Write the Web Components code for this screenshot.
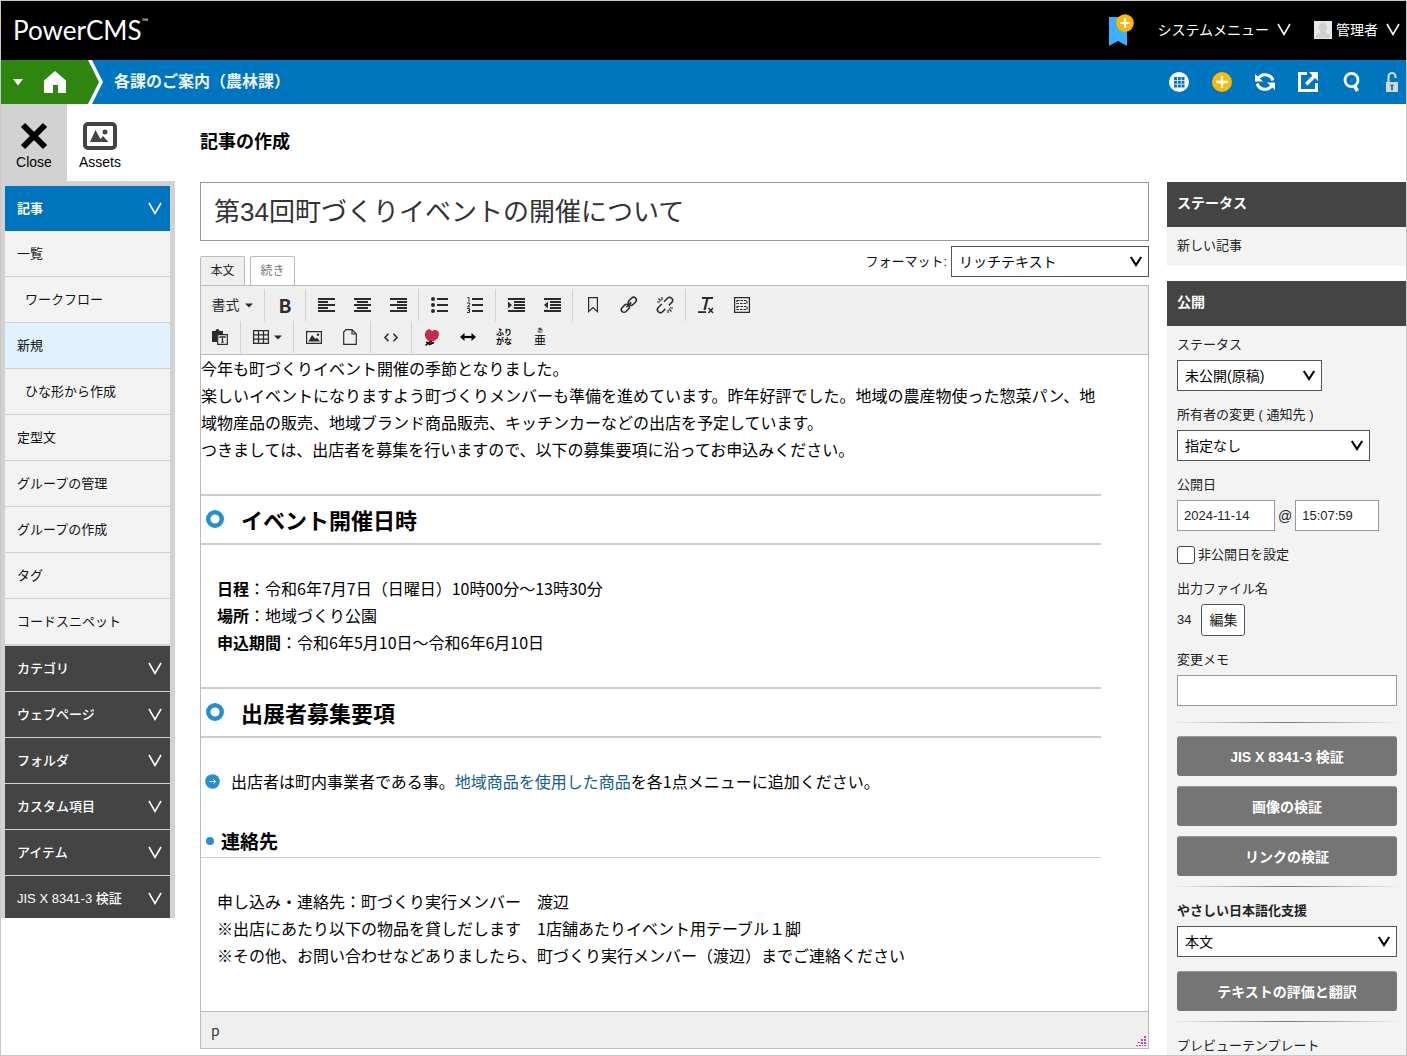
<!DOCTYPE html>
<html lang="ja">
<head>
<meta charset="utf-8">
<title>記事の作成 | PowerCMS</title>
<style>
  body {
    margin: 0;
    background: #fff;
    color: #111;
    font: 13px/20px "Liberation Sans", "Noto Sans CJK JP", sans-serif;
  }
</style>
</head>
<body>
<cms-app></cms-app>

<script>
const RESET = `
  *, *::before, *::after { box-sizing: border-box; }
  :host { box-sizing: border-box; display: block; }
  button, input, select { font: inherit; color: inherit; margin: 0; border-radius: 0; }
  button { cursor: pointer; background: none; border: 0; padding: 0; }
  a { color: inherit; text-decoration: none; }
  svg { display: block; }
`;

function define(name, css, html) {
  customElements.define(name, class extends HTMLElement {
    connectedCallback() {
      if (this.shadowRoot) return;
      const root = this.attachShadow({ mode: 'open' });
      root.innerHTML = `<style>${RESET}${css}</style>` + (typeof html === 'function' ? html(this) : html);
    }
  });
}

/* ---------- icons: [width, height, markup] ---------- */
const lines = (rows) => rows.map(([x, w], i) => `<path d="M${x} ${i * 3}h${w}v2h-${w}z"/>`).join('');
const ICONS = {
  chevron: [14, 14, '<path d="M1 1 7 11.500 13 1" fill="none" stroke="currentColor" stroke-width="1.600"/>'],
  'chevron-bold': [12, 12, '<path d="M.8 1 6 9 11.200 1" fill="none" stroke="currentColor" stroke-width="2.100"/>'],
  caret: [8, 5, '<path d="M0 .5h8L4 4.500z"/>'],
  'caret-big': [10, 7, '<path d="M0 0h10L5 6.500z"/>'],
  home: [22, 22, '<path d="M11 0 22 9.500V22h-8v-8H9v8H0V9.500z"/>'],
  bookmarkadd: [26, 32, '<path d="M0 3h18v29l-9-5-9 5z" fill="#3cb0ff"/><circle cx="16" cy="9" r="8.800" fill="#fdb900"/><path d="M16 4v10M11 9h10" stroke="#fff" stroke-width="2.200"/>'],
  avatar: [18, 18, '<path d="M0 0h18v18H0z" fill="#e6e6e6"/><path d="M9 2c3 0 4.200 2 4 4.500-.1 2-1 3.500-1.800 4.300.2 1.600 4.300 1.700 4.800 4.200V17H2v-2c.5-2.500 4.600-2.600 4.800-4.200C6 10 5.100 8.500 5 6.500 4.800 4 6 2 9 2z" fill="#cfcfcf"/>'],
  grid: [20, 20, '<circle cx="10" cy="10" r="10" fill="#fff"/><g fill="#0075bf"><path d="M5 5h3v3H5zM8.800 5h3v3h-3zM12.500 5h3v3h-3zM5 8.800h3v3H5zM8.800 8.800h3v3h-3zM12.500 8.800h3v3h-3zM5 12.500h3v3H5zM8.800 12.500h3v3h-3zM12.500 12.500h3v3h-3z"/></g>'],
  plus: [20, 20, '<circle cx="10" cy="10" r="10" fill="#fdb900"/><path d="M10 4v12M4 10h12" stroke="#fff" stroke-width="2.400"/>'],
  refresh: [20, 20, '<g fill="none" stroke="currentColor" stroke-width="3"><path d="M3 7A8 8 0 0 1 17.800 8.500"/><path d="M17 13A8 8 0 0 1 2.200 11.500"/></g><path d="M0 2v7.500h8zM20 18v-7.500h-8z"/>'],
  external: [20, 20, '<path d="M9 1.500H1.500v17h17V11" fill="none" stroke="currentColor" stroke-width="3"/><path d="M11 0h9v9l-3-3-7.500 7.500-2.500-2.500L14.500 3.500z"/>'],
  search: [22, 20, '<ellipse cx="10.500" cy="8" rx="6.500" ry="6.700" fill="none" stroke="currentColor" stroke-width="2.800"/><path d="m13 13 3.500 6" stroke="currentColor" stroke-width="3.500"/>'],
  lock: [12, 20, '<g fill="#d5d5d5"><path d="M0 10h12v10H0z"/><path d="M2.500 10V4.500a3.500 3.500 0 0 1 7 0V6" fill="none" stroke="#d5d5d5" stroke-width="2.200"/></g><path d="M6 12.500v5M4.500 13.500h3M5 17.500h2" stroke="#0075bf" stroke-width="1.600"/>'],
  close: [28, 28, '<path d="M3 3l22 22M25 3 3 25" stroke="currentColor" stroke-width="6"/>'],
  assets: [34, 28, '<rect x="2" y="2" width="30" height="24" rx="3" fill="none" stroke="#444" stroke-width="4"/><path d="M7 20 12.500 8l5 9 2.500-3 5.500 6z" fill="#444"/><circle cx="22" cy="10" r="2.500" fill="#444"/>'],
  left: [17, 14, lines([[0, 17], [0, 10], [0, 17], [0, 10], [0, 17]])],
  center: [17, 14, lines([[0, 17], [3, 11], [0, 17], [3, 11], [0, 17]])],
  right: [17, 14, lines([[0, 17], [7, 10], [0, 17], [7, 10], [0, 17]])],
  bullets: [17, 16, '<circle cx="2" cy="2" r="2"/><circle cx="2" cy="8" r="2"/><circle cx="2" cy="14" r="2"/><path d="M6 1h11v2H6zM6 7h11v2H6zM6 13h11v2H6z"/>'],
  numbers: [16, 16, '<path d="M5 1h11v2H5zM5 7h11v2H5zM5 13h11v2H5z"/><path d="M.5 .5H2v4M0 6h2.500v1.800L.5 9.800h2.500M0 11.500h2.500v4H0M1 13.500h1.500" fill="none" stroke="currentColor"/>'],
  indent: [17, 14, lines([[0, 17], [6, 11], [6, 11], [6, 11], [0, 17]]) + '<path d="M0 3.500v7L4 7z"/>'],
  outdent: [17, 14, lines([[0, 17], [6, 11], [6, 11], [6, 11], [0, 17]]) + '<path d="M4 3.500v7L0 7z"/>'],
  bookmark: [10, 16, '<path d="M.6.700h8.800v14L5 10.500.6 14.700z" fill="none" stroke="currentColor" stroke-width="1.200"/>'],
  link: [16, 16, '<g fill="none" stroke="currentColor" stroke-width="1.500" transform="rotate(-45 8 8)"><rect x="-1.500" y="5" width="9" height="5.500" rx="2.700"/><rect x="8.500" y="5" width="9" height="5.500" rx="2.700"/><path d="M4.500 7.750h7"/></g>'],
  unlink: [16, 16, '<g fill="none" stroke="currentColor" stroke-width="1.500"><g transform="rotate(-45 8 8)"><path d="M5.500 11H1.500a3 3 0 0 1 0-6h5M9.500 5h5a3 3 0 0 1 0 6h-4"/></g><path d="M5 0v3M0 5h3M1.500 1.500l2.500 2.500M11 13v3M13 11h3M12 12l2.500 2.500" stroke-width="1.200"/></g>'],
  clear: [17, 17, '<path d="M4 1h11M9.500 1 6.500 13" fill="none" stroke="currentColor" stroke-width="2.200"/><path d="M0 14.200h8v1.800H0z"/><path d="m10.500 11 4.500 5M15 11l-4.500 5" stroke="currentColor" stroke-width="1.500"/>'],
  template: [16, 16, '<path d="M.6.600h14.800v14.800H.6z" fill="none" stroke="currentColor" stroke-width="1.200"/><path d="M3 3.500h10v3H3zM3 9.500h10v3H3z" fill="none" stroke="currentColor" stroke-width="1.200" stroke-dasharray="2.500 1"/>'],
  paste: [16, 16, '<path d="M0 2h3.500a2 2 0 0 1 4 0H11v3H5v8H0z"/><path d="M5.700 5.700h9.600v9.600H5.700z" fill="#efefef" stroke="currentColor" stroke-width="1.200"/><path d="M8 9V7.800h5V9M10.500 7.800v5.500M9.300 13.200h2.400" fill="none" stroke="currentColor" stroke-width="1.300"/>'],
  table: [16, 14, '<path d="M.6.600h14.800v12.800H.6zM.6 4.800h14.800M.6 9.200h14.800M5.500.6v12.800M10.500.6v12.800" fill="none" stroke="currentColor" stroke-width="1.300"/>'],
  image: [16, 13, '<path d="M.6.600h14.800v11.800H.6z" fill="none" stroke="currentColor" stroke-width="1.200"/><path d="M2.500 10.500 6 4l3.500 4L11 6.800l3 3.700z"/><circle cx="12" cy="3.800" r="1.200"/>'],
  file: [14, 16, '<path d="M.7 3V15.300h12.600V5L9 .7H3zM9 .7V5h4.300" fill="none" stroke="currentColor" stroke-width="1.200"/>'],
  code: [14, 9, '<path d="M4.500.8 1 4.500l3.500 3.700M9.500.8 13 4.500 9.500 8.200" fill="none" stroke="currentColor" stroke-width="1.600"/>'],
  heart: [16, 17, '<path d="M3 1c2-1.500 4-.5 5 1.200C10 .6 13 .5 14.500 3c.8 1.500.3 3 0 4.500C14 10 11 12 6.500 13 4 12 1.500 10 1 7 .5 4.500 1.500 2.500 3 1z" fill="#c9284f"/><path d="M2 13.500h3l3-1M1.500 16.500l3-2.500 1 1.500 4.500-2" fill="none" stroke="#000" stroke-width="1.500"/>'],
  arrows: [16, 8, '<path d="M3 4h10" stroke="#000" stroke-width="2.200"/><path d="M4.500 0v8L0 4zM11.500 0v8L16 4z" fill="#000"/>'],
  ring: [18, 18, '<circle cx="9" cy="9" r="6.800" fill="none" stroke="#258fd2" stroke-width="4.400"/>'],
  go: [15, 15, '<circle cx="7.500" cy="7.500" r="7.300" fill="#258fd2"/><path d="M4.500 7.500h6M8.500 5.500l2 2-2 2" fill="none" stroke="#fff"/>'],
  dot: [8, 8, '<circle cx="4" cy="4" r="4" fill="#258fd2"/>'],
  grip: [10, 10, '<path d="M8 0h2v2H8zM5 3h2v2H5zM8 3h2v2H8zM2 6h2v1H2zM5 6h2v2H5zM8 6h2v2H8zM0 9h2v1H0zM3 9h2v1H3zM6 9h1v1H6zM8 9h2v1H8z" fill="#b04ea5"/>']
};
define('cms-icon', ':host{display:inline-block;flex:none} svg{overflow:visible}', (el) => {
  const [w, h, body] = ICONS[el.getAttribute('name')];
  return `<svg width="${w}" height="${h}" viewBox="0 0 ${w} ${h}" fill="currentColor" aria-hidden="true">${body}</svg>`;
});

/* ---------- header ---------- */
define('cms-header', `
  :host { display: flex; align-items: center; height: 59px; padding: 0 6px 2px 12px; background: #000; color: #fff; font-size: 14px; }
  .logo { display: flex; align-items: flex-start; font: 26px/32px Lato, "Liberation Sans", sans-serif; margin-right: auto; }
  .logo sup { font-size: 9px; line-height: 16px; }
  button { display: flex; align-items: center; gap: 8px; }
  .mark { margin-right: 22px; }
  .user { margin-left: 23px; }
  .user .who { display: flex; align-items: center; gap: 4px; }
`, `
  <a class="logo" href="#"><span>PowerCMS</span><sup>™</sup></a>
  <button class="mark" aria-label="ブックマークに追加"><cms-icon name="bookmarkadd"></cms-icon></button>
  <button>システムメニュー<cms-icon name="chevron"></cms-icon></button>
  <button class="user"><span class="who"><cms-icon name="avatar"></cms-icon>管理者</span><cms-icon name="chevron"></cms-icon></button>
`);

define('cms-scopebar', `
  :host { display: flex; align-items: center; height: 44px; padding-right: 8px; background: #0075bf; color: #fff; }
  .arrow { width: 102px; height: 44px; background: #fff; clip-path: polygon(0 0, calc(100% - 11px) 0, 100% 50%, calc(100% - 11px) 100%, 0 100%); }
  .green { display: flex; align-items: center; gap: 21px; width: 98px; height: 44px; padding-left: 12px; background: #2e8610; clip-path: polygon(0 0, calc(100% - 11px) 0, 100% 50%, calc(100% - 11px) 100%, 0 100%); }
  button, .green a { display: flex; align-items: center; }
  .name { margin: 0 auto 0 11px; font-size: 16px; font-weight: 700; color: #eef4f9; }
  nav { display: flex; gap: 23px; }
`, `
  <div class="arrow"><div class="green">
    <button aria-label="サイト一覧"><cms-icon name="caret-big"></cms-icon></button>
    <a href="#" aria-label="ホーム"><cms-icon name="home"></cms-icon></a>
  </div></div>
  <a class="name" href="#"><slot></slot></a>
  <nav>
    <button aria-label="一覧"><cms-icon name="grid"></cms-icon></button>
    <button aria-label="新規"><cms-icon name="plus"></cms-icon></button>
    <button aria-label="再構築"><cms-icon name="refresh"></cms-icon></button>
    <button aria-label="サイトを表示"><cms-icon name="external"></cms-icon></button>
    <button aria-label="検索"><cms-icon name="search"></cms-icon></button>
    <button aria-label="ロック"><cms-icon name="lock"></cms-icon></button>
  </nav>
`);

/* ---------- left column ---------- */
define('cms-tile', `
  button { display: flex; flex-direction: column; align-items: center; width: 66px; height: 77px; padding-top: 18px; gap: 2px; font-size: 14px; color: #000; }
  :host([active]) button { background: #d2d2d2; }
`, (el) => `<button><cms-icon name="${el.getAttribute('icon')}"></cms-icon><slot></slot></button>`);

define('cms-navhead', `
  button { display: flex; align-items: center; justify-content: space-between; width: 100%; height: 45px; padding: 0 8px 0 12px; background: #444; color: #fff; font-weight: 500; }
  :host([current]) button { background: #0075bf; font-weight: 700; }
`, '<button><slot></slot><cms-icon name="chevron"></cms-icon></button>');

define('cms-navitem', `
  :host { background: #f3f3f3; }
  a { display: flex; align-items: center; height: 45px; padding-left: 12px; color: #111; }
  :host([sub]) a { padding-left: 20px; }
  :host([current]) { background: #e0f2fe; }
`, '<a href="#"><slot></slot></a>');

define('cms-sidebar', `
  .tiles { display: flex; }
  nav { display: flex; flex-direction: column; gap: 1px; padding: 5px 5px 0 4px; background: #d2d2d2; overflow: hidden; }
  .list { display: flex; flex-direction: column; gap: 1px; padding-bottom: 1px; margin-top: -1px; }
  .last { height: 42px; overflow: hidden; }
`, `
  <div class="tiles"><cms-tile icon="close" active>Close</cms-tile><cms-tile icon="assets">Assets</cms-tile></div>
  <nav>
    <cms-navhead current>記事</cms-navhead>
    <div class="list">
      <cms-navitem>一覧</cms-navitem>
      <cms-navitem sub>ワークフロー</cms-navitem>
      <cms-navitem current>新規</cms-navitem>
      <cms-navitem sub>ひな形から作成</cms-navitem>
      <cms-navitem>定型文</cms-navitem>
      <cms-navitem>グループの管理</cms-navitem>
      <cms-navitem>グループの作成</cms-navitem>
      <cms-navitem>タグ</cms-navitem>
      <cms-navitem>コードスニペット</cms-navitem>
    </div>
    <cms-navhead>カテゴリ</cms-navhead>
    <cms-navhead>ウェブページ</cms-navhead>
    <cms-navhead>フォルダ</cms-navhead>
    <cms-navhead>カスタム項目</cms-navhead>
    <cms-navhead>アイテム</cms-navhead>
    <cms-navhead class="last">JIS X 8341-3 検証</cms-navhead>
  </nav>
`);

/* ---------- form parts ---------- */
define('cms-select', `
  :host { display: flex; flex-direction: column; align-items: flex-start; gap: 5px; }
  :host([inline]) { flex-direction: row; align-items: center; gap: 4px; }
  :host([strong]) label { font-weight: 700; }
  .box { display: grid; max-width: 100%; }
  .box > * { grid-area: 1 / 1; }
  select { appearance: none; width: 100%; height: 31px; padding: 0 7px; border: 1px solid #555; background: #fff; color: #000; font-size: 14px; }
  cms-icon { align-self: center; justify-self: end; margin-right: 7px; color: #000; pointer-events: none; }
`, (el) => `<label for="s">${el.getAttribute('label')}</label>
  <span class="box" style="width:${el.getAttribute('size')}"><select id="s"><option>${el.getAttribute('value')}</option></select><cms-icon name="chevron-bold"></cms-icon></span>`);

define('cms-action', `
  button { width: 100%; height: 40px; border-top: 1px solid #999; border-radius: 3px; background: #757575; color: #fff; font-size: 14px; font-weight: 700; }
`, '<button><slot></slot></button>');

define('cms-rule', ':host { height: 1px; background: linear-gradient(90deg, #eee, #777 50%, #eee); }', '');

define('cms-panel', `
  h2 { margin: 0; height: 45px; padding: 0 10px; background: #444; color: #fff; font-size: 14px; line-height: 43px; font-weight: 700; }
  .body { padding: 9px 9px 10px 10px; background: #f3f3f3; }
`, (el) => `<h2>${el.getAttribute('heading')}</h2><div class="body"><slot></slot></div>`);

define('cms-publish', `
  :host { display: flex; flex-direction: column; gap: 14px; color: #222; }
  .field { display: flex; flex-direction: column; gap: 5px; }
  .row { display: flex; align-items: center; gap: 3px; }
  .row.file { gap: 10px; }
  .at { font-size: 14px; }
  input[type=text] { height: 31px; padding: 0 6px; border: 1px solid #999; background: #fff; color: #222; }
  .date { width: 98px; } .time { width: 84px; }
  input[type=checkbox] { appearance: none; width: 18px; height: 18px; border: 1px solid #444; border-radius: 3px; background: #fff; }
  .edit { height: 32px; padding: 0 7px; border: 1px solid #555; border-radius: 3px; background: #fff; font-size: 14px; }
  .stack { display: flex; flex-direction: column; gap: 10px; }
  .first { margin: 2px 0 -1px; }
`, `
  <cms-select label="ステータス" value="未公開(原稿)" size="145px"></cms-select>
  <cms-select label="所有者の変更 ( 通知先 )" value="指定なし" size="193px"></cms-select>
  <div class="field"><label for="d">公開日</label>
    <div class="row"><input type="text" class="date" id="d" value="2024-11-14"><span class="at">@</span><input type="text" class="time" aria-label="時刻" value="15:07:59"></div></div>
  <div class="row"><input type="checkbox" id="u"><label for="u">非公開日を設定</label></div>
  <div class="field"><span>出力ファイル名</span><div class="row file"><span>34</span><button class="edit">編集</button></div></div>
  <div class="field"><label for="m">変更メモ</label><input type="text" id="m"></div>
  <cms-rule class="first"></cms-rule>
  <div class="stack">
    <cms-action>JIS X 8341-3 検証</cms-action>
    <cms-action>画像の検証</cms-action>
    <cms-action>リンクの検証</cms-action>
    <cms-rule></cms-rule>
  </div>
  <cms-select strong label="やさしい日本語化支援" value="本文" size="100%"></cms-select>
  <div class="stack">
    <cms-action>テキストの評価と翻訳</cms-action>
    <cms-rule></cms-rule>
  </div>
  <cms-select label="プレビューテンプレート" value="指定なし" size="100%"></cms-select>
`);

/* ---------- editor ---------- */
define('cms-tool', `
  :host { display: flex; }
  button { display: flex; align-items: center; justify-content: center; gap: 5px; min-width: 36px; height: 32px; color: #2b2b2b; }
  .wide { width: 48px; }
  .text { width: 60px; font-size: 14px; }
`, (el) => {
  const icon = el.getAttribute('icon');
  const menu = el.hasAttribute('menu');
  return `<button class="${menu ? (icon ? 'wide' : 'text') : ''}" aria-label="${el.getAttribute('tip') || ''}">${icon ? `<cms-icon name="${icon}"></cms-icon>` : '<slot></slot>'}${menu ? '<cms-icon name="caret"></cms-icon>' : ''}</button>`;
});

define('cms-toolbar', `
  :host { padding: 3px 0 1px; background: #efefef; border-bottom: 1px solid #bbb; }
  .row { display: flex; flex-wrap: wrap; }
  .g { display: flex; padding: 0 2px; border-right: 1px solid #d2d2d2; }
  .g:first-child { padding-left: 1px; }
  .g:last-child { border: 0; }
  b { font: 700 19px/30px "Noto Sans CJK JP", sans-serif; }
  .kana, .ruby { display: flex; flex-direction: column; align-items: center; color: #000; }
  .kana { font-size: 8px; line-height: 9px; font-weight: 700; }
  .ruby { font-size: 6px; line-height: 7px; }
  .ruby span:last-child { font-size: 12px; line-height: 14px; }
`, `
  <div class="row">
    <div class="g"><cms-tool menu tip="書式">書式</cms-tool></div>
    <div class="g"><cms-tool tip="太字"><b>B</b></cms-tool></div>
    <div class="g"><cms-tool icon="left"></cms-tool><cms-tool icon="center"></cms-tool><cms-tool icon="right"></cms-tool></div>
    <div class="g"><cms-tool icon="bullets"></cms-tool><cms-tool icon="numbers"></cms-tool></div>
    <div class="g"><cms-tool icon="indent"></cms-tool><cms-tool icon="outdent"></cms-tool></div>
    <div class="g"><cms-tool icon="bookmark"></cms-tool><cms-tool icon="link"></cms-tool><cms-tool icon="unlink"></cms-tool></div>
    <div class="g"><cms-tool icon="clear"></cms-tool><cms-tool icon="template"></cms-tool></div>
  </div>
  <div class="row">
    <div class="g"><cms-tool icon="paste"></cms-tool></div>
    <div class="g"><cms-tool icon="table" menu></cms-tool></div>
    <div class="g"><cms-tool icon="image"></cms-tool><cms-tool icon="file"></cms-tool></div>
    <div class="g"><cms-tool icon="code"></cms-tool></div>
    <div class="g"><cms-tool icon="heart"></cms-tool><cms-tool icon="arrows"></cms-tool>
      <cms-tool tip="ふりがな"><span class="kana"><span>ふり</span><span>がな</span></span></cms-tool>
      <cms-tool tip="ルビ"><span class="ruby"><span>あ</span><span>亜</span></span></cms-tool></div>
  </div>
`);

define('cms-document', `
  :host { font: 16px/27px "Noto Sans CJK JP", sans-serif; color: #000; }
  article { max-width: 900px; }
  p { margin: 0; }
  .in { padding-left: 16px; }
  h2, h3 { display: flex; align-items: center; margin: 0; font-weight: 700; }
  h2 { gap: 17px; height: 51px; margin: 31px 0 30px; padding: 0 0 1px 5px; border: solid #ccc; border-width: 2px 0; font-size: 22px; }
  h3 { gap: 7px; padding: 0 0 3px 5px; margin: 32px 0 30px; border-bottom: 1px solid #ccc; font-size: 19px; }
  ul { list-style: none; margin: 0; padding: 0 0 0 4px; }
  li { display: flex; align-items: center; gap: 11px; }
  a { color: #15608f; }
`, `
  <article>
    <p>今年も町づくりイベント開催の季節となりました。<br>楽しいイベントになりますよう町づくりメンバーも準備を進めています。昨年好評でした。地域の農産物使った惣菜パン、地域物産品の販売、地域ブランド商品販売、キッチンカーなどの出店を予定しています。<br>つきましては、出店者を募集を行いますので、以下の募集要項に沿ってお申込みください。</p>
    <h2><cms-icon name="ring"></cms-icon><span>イベント開催日時</span></h2>
    <p class="in"><b>日程</b>：令和6年7月7日（日曜日）10時00分～13時30分<br><b>場所</b>：地域づくり公園<br><b>申込期間</b>：令和6年5月10日～令和6年6月10日</p>
    <h2><cms-icon name="ring"></cms-icon><span>出展者募集要項</span></h2>
    <ul><li><cms-icon name="go"></cms-icon><span>出店者は町内事業者である事。<a href="#">地域商品を使用した商品</a>を各1点メニューに追加ください。</span></li></ul>
    <h3><cms-icon name="dot"></cms-icon><span>連絡先</span></h3>
    <p class="in">申し込み・連絡先：町づくり実行メンバー　渡辺<br>※出店にあたり以下の物品を貸しだします　1店舗あたりイベント用テーブル１脚<br>※その他、お問い合わせなどありましたら、町づくり実行メンバー（渡辺）までご連絡ください</p>
  </article>
`);

define('cms-editor', `
  .top { display: flex; justify-content: space-between; height: 39px; }
  .tabs { display: flex; align-items: flex-end; gap: 5px; }
  .tabs button { width: 45px; height: 29px; border: 1px solid #bbb; border-bottom: 0; border-radius: 2px 2px 0 0; font-size: 12px; color: #777; background: #fff; }
  .tabs button.on { background: #efefef; color: #222; }
  .frame { border: 1px solid #bbb; }
  cms-document { padding-bottom: 42px; }
  .status { display: flex; align-items: center; height: 37px; padding: 0 2px 0 10px; border-top: 1px solid #bbb; background: #efefef; font: 14px/20px "Noto Sans CJK JP", sans-serif; color: #333; }
  .status cms-icon { margin: auto 0 2px auto; }
  cms-select { align-self: flex-start; }
`, `
  <div class="top">
    <div class="tabs"><button class="on">本文</button><button>続き</button></div>
    <cms-select inline label="フォーマット:" value="リッチテキスト" size="198px"></cms-select>
  </div>
  <div class="frame">
    <cms-toolbar></cms-toolbar>
    <cms-document></cms-document>
    <div class="status"><span>p</span><cms-icon name="grip"></cms-icon></div>
  </div>
`);

/* ---------- page ---------- */
define('cms-app', `
  :host { height: 100vh; overflow: hidden; border: 1px solid #c8c8c8; }
  .cols { display: grid; grid-template-columns: 174px minmax(0, 1fr) 239px; }
  main { padding: 28px 18px 0 25px; }
  h1 { margin: 0 0 30px; font-size: 18px; line-height: 20px; font-weight: 700; color: #000; }
  .title { display: block; width: 100%; height: 59px; margin-bottom: 5px; padding: 0 13px 5px; border: 1px solid #999; background: #fff; color: #333; font-size: 26px; }
  aside { display: flex; flex-direction: column; gap: 15px; padding-top: 78px; color: #222; }
`, `
  <cms-header></cms-header>
  <cms-scopebar>各課のご案内（農林課）</cms-scopebar>
  <div class="cols">
    <cms-sidebar></cms-sidebar>
    <main>
      <h1>記事の作成</h1>
      <input class="title" type="text" aria-label="タイトル" value="第34回町づくりイベントの開催について">
      <cms-editor></cms-editor>
    </main>
    <aside>
      <cms-panel heading="ステータス">新しい記事</cms-panel>
      <cms-panel heading="公開"><cms-publish></cms-publish></cms-panel>
    </aside>
  </div>
`);
</script>
</body>
</html>
